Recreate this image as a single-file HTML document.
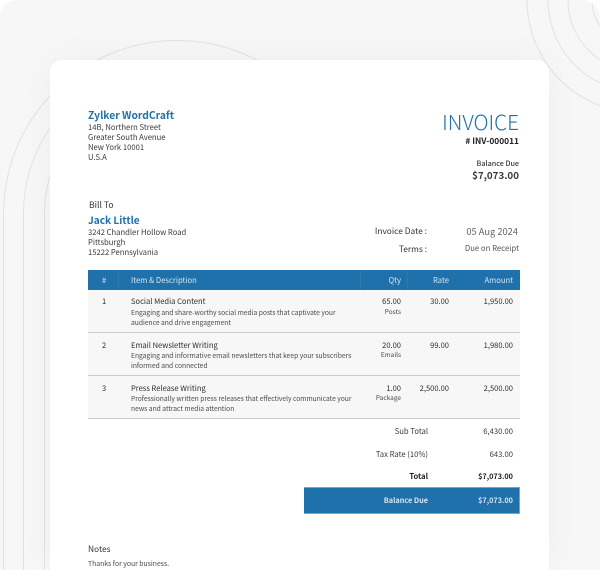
<!DOCTYPE html>
<html><head><meta charset="utf-8">
<style>
html,body{margin:0;padding:0;background:#fff;height:570px;overflow:hidden}
#p{position:relative;width:600px;height:570px;overflow:hidden;background:#fff;font-family:"Noto Sans CJK SC","Liberation Sans",sans-serif;color:#3a3a3a}
#bg{position:absolute;left:0;top:0;width:600px;height:570px;border-radius:18px 18px 0 0;background:#f7f7f7;overflow:hidden}
svg{position:absolute;left:0;top:0}
#card{position:absolute;left:50px;top:60px;width:499px;height:510px;background:#fff;border-radius:12px 12px 0 0;box-shadow:0 0 36px rgba(0,0,0,.045)}
#c{position:absolute;left:0;top:0;width:600px;height:570px;overflow:hidden;filter:blur(.2px)}
.t{position:absolute;white-space:nowrap;line-height:12px;font-size:7.650px}
.r{text-align:right}
.blue{color:#1f71ab}
.box{position:absolute}
.w{color:#d5e5f0}
.d{font-size:6.700px;color:#4a4a4a}
.u{font-size:6.500px;color:#4a4a4a}
.m{color:#2e2e2e;font-size:7.550px}
</style></head><body>
<div id="p">
<div id="bg">
<svg width="600" height="570" fill="none" stroke="#e2e2e2" stroke-width="1">
<path d="M3.5 570V214A173.500 173.500 0 0 1 350.500 214"/>
<path d="M23.500 570V214A153.500 153.500 0 0 1 330.500 214"/>
<path d="M44.500 570V214A132.500 132.500 0 0 1 309.500 214"/>
<circle cx="640" cy="0" r="113"/>
<circle cx="640" cy="0" r="92"/>
<circle cx="640" cy="0" r="72"/>
<circle cx="640" cy="0" r="48"/>
</svg>
<div id="card"></div>
</div>
<div id="c">
<div class="t blue" style="left:88px;top:108px;font-size:10.300px;line-height:13px;font-weight:700">Zylker WordCraft</div>
<div class="t" style="left:88px;top:122px">14B, Northern Street</div>
<div class="t" style="left:88px;top:132px">Greater South Avenue</div>
<div class="t" style="left:88px;top:142px">New York 10001</div>
<div class="t" style="left:88px;top:152px">U.S.A</div>

<div class="t r blue" style="right:81px;top:107px;font-size:20.700px;line-height:28px;font-weight:300">INVOICE</div>
<div class="t r" style="right:81px;top:135px;font-size:8.400px;font-weight:700;color:#222"># INV-000011</div>
<div class="t r" style="right:81px;top:158px;font-size:7.200px;font-weight:500">Balance Due</div>
<div class="t r" style="right:81px;top:168px;font-size:9.800px;line-height:14px;font-weight:700">$7,073.00</div>

<div class="t" style="left:89px;top:199px;font-size:8.600px;color:#333">Bill To</div>
<div class="t blue" style="left:88px;top:213px;font-size:10.100px;line-height:14px;font-weight:700">Jack Little</div>
<div class="t" style="left:88px;top:227px">3242 Chandler Hollow Road</div>
<div class="t" style="left:88px;top:237px">Pittsburgh</div>
<div class="t" style="left:88px;top:247px">15222 Pennsylvania</div>

<div class="t r" style="right:173px;top:225px;font-size:8.400px;color:#333">Invoice Date :</div>
<div class="t r" style="right:173px;top:243px;font-size:8.400px;color:#333">Terms :</div>
<div class="t r" style="right:82px;top:225px;font-size:9.300px;color:#666">05 Aug 2024</div>
<div class="t r" style="right:81px;top:243px;font-size:7.750px;color:#555">Due on Receipt</div>

<div class="box" style="left:88px;top:270px;width:432px;height:20px;background:#1f71ab"></div>
<div class="box" style="left:118px;top:271px;width:1px;height:19px;background:#2b7ab2"></div>
<div class="box" style="left:360px;top:271px;width:1px;height:19px;background:#2b7ab2"></div>
<div class="box" style="left:407px;top:271px;width:1px;height:19px;background:#2b7ab2"></div>
<div class="t w" style="left:102px;top:275px">#</div>
<div class="t w" style="left:131px;top:275px">Item &amp; Description</div>
<div class="t r w" style="right:199px;top:275px">Qty</div>
<div class="t r w" style="right:151px;top:275px">Rate</div>
<div class="t r w" style="right:87px;top:275px">Amount</div>

<div class="box" style="left:88px;top:290px;width:432px;height:42px;background:#f7f7f7;border-bottom:1px solid #ccc"></div>
<div class="box" style="left:88px;top:333px;width:432px;height:42px;background:#f7f7f7;border-bottom:1px solid #ccc"></div>
<div class="box" style="left:88px;top:376px;width:432px;height:42px;background:#f7f7f7;border-bottom:1px solid #ccc"></div>

<div class="t m" style="left:102px;top:296px">1</div>
<div class="t m" style="left:131px;top:296px">Social Media Content</div>
<div class="t d" style="left:131px;top:306px">Engaging and share-worthy social media posts that captivate your</div>
<div class="t d" style="left:131px;top:316px">audience and drive engagement</div>
<div class="t r m" style="right:199px;top:296px">65.00</div>
<div class="t r u" style="right:199px;top:305px">Posts</div>
<div class="t r m" style="right:151px;top:296px">30.00</div>
<div class="t r m" style="right:87px;top:296px">1,950.00</div>

<div class="t m" style="left:102px;top:340px">2</div>
<div class="t m" style="left:131px;top:340px">Email Newsletter Writing</div>
<div class="t d" style="left:131px;top:349px">Engaging and informative email newsletters that keep your subscribers</div>
<div class="t d" style="left:131px;top:359px">informed and connected</div>
<div class="t r m" style="right:199px;top:340px">20.00</div>
<div class="t r u" style="right:199px;top:348px">Emails</div>
<div class="t r m" style="right:151px;top:340px">99.00</div>
<div class="t r m" style="right:87px;top:340px">1,980.00</div>

<div class="t m" style="left:102px;top:383px">3</div>
<div class="t m" style="left:131px;top:383px">Press Release Writing</div>
<div class="t d" style="left:131px;top:392px">Professionally written press releases that effectively communicate your</div>
<div class="t d" style="left:131px;top:402px">news and attract media attention</div>
<div class="t r m" style="right:199px;top:383px">1.00</div>
<div class="t r u" style="right:199px;top:391px">Package</div>
<div class="t r m" style="right:151px;top:383px">2,500.00</div>
<div class="t r m" style="right:87px;top:383px">2,500.00</div>

<div class="t r" style="right:172px;top:426px">Sub Total</div>
<div class="t r" style="right:87px;top:426px">6,430.00</div>
<div class="t r" style="right:172px;top:449px">Tax Rate (10%)</div>
<div class="t r" style="right:87px;top:449px">643.00</div>
<div class="t r" style="right:172px;top:471px;font-weight:700;color:#222">Total</div>
<div class="t r" style="right:87px;top:471px;font-weight:700;color:#222;font-size:7.300px">$7,073.00</div>

<div class="box" style="left:304px;top:487px;width:215px;height:25px;background:#1f71ab;border:solid #6fa6cc;border-width:1px 1px 1px 0"></div>
<div class="t r w" style="right:172px;top:495px;font-weight:700;font-size:7.300px">Balance Due</div>
<div class="t r w" style="right:87px;top:495px;font-weight:700;font-size:7.300px">$7,073.00</div>

<div class="t" style="left:88px;top:543px;font-size:8.400px;color:#333">Notes</div>
<div class="t" style="left:88px;top:557px;font-size:6.850px;color:#4a4a4a">Thanks for your business.</div>
</div>
</div>
</body></html>
